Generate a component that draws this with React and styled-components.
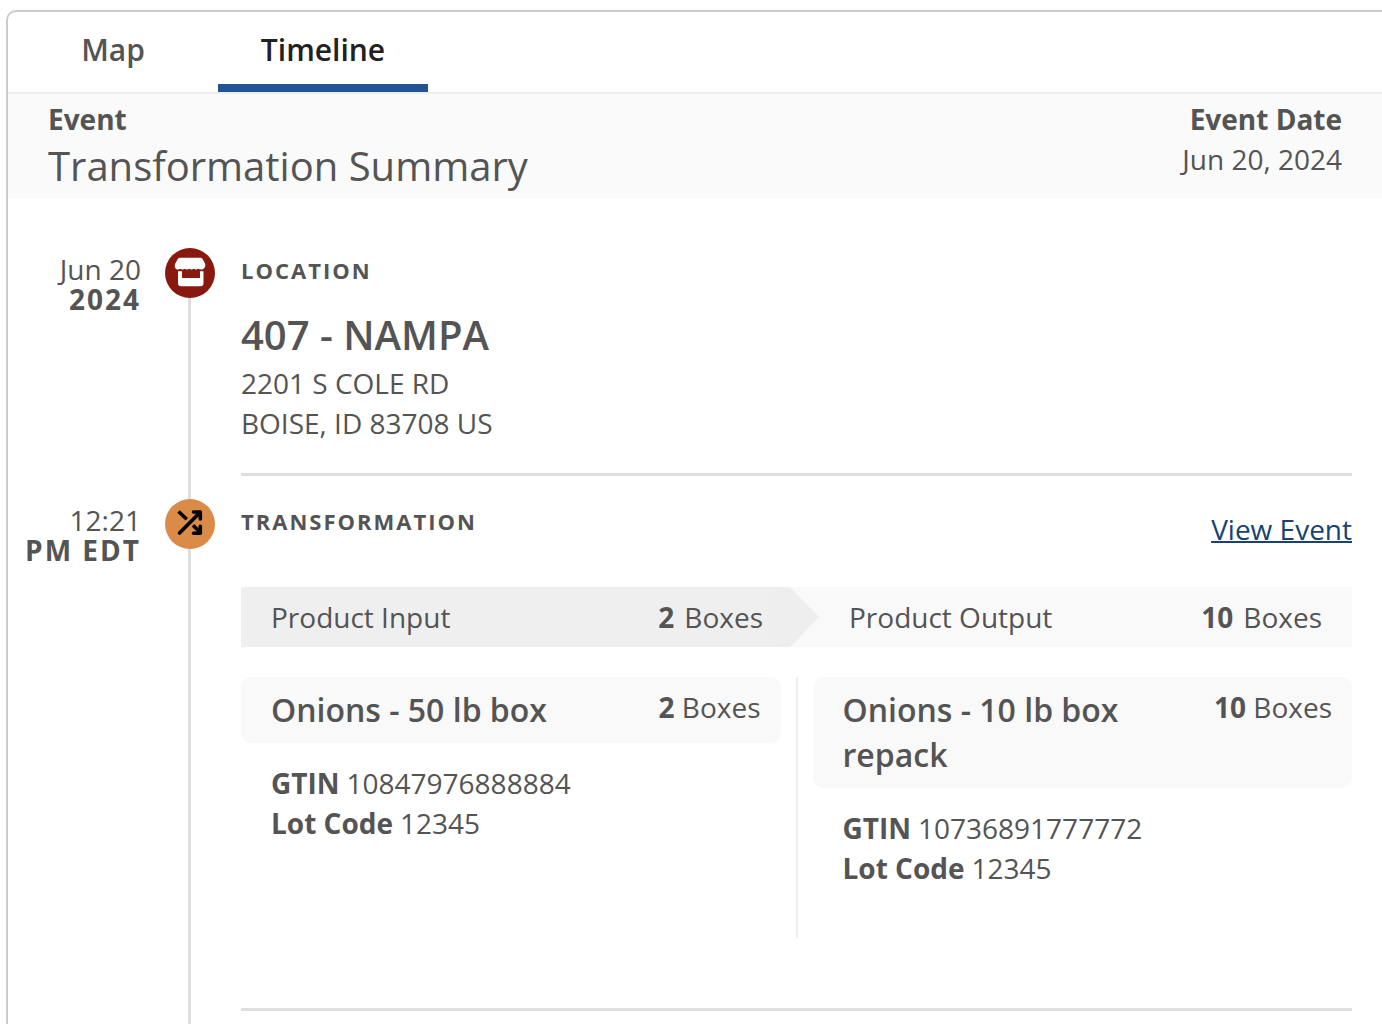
import styled, { createGlobalStyle } from 'styled-components';

const palette = {
  text: '#545454',
  textStrong: '#212121',
  primary: '#205493',
  link: '#174372',
  line: '#dedede',
  border: '#cccccc',
  rule: '#eeeeee',
  surface: '#fafafa',
  output: '#f9f9f9',
  input: '#efefef',
  location: '#87190e',
  transformation: '#da8b48',
};

const GlobalStyle = createGlobalStyle`
  *,
  *::before,
  *::after {
    box-sizing: border-box;
  }

  body {
    margin: 0;
    background: #ffffff;
    color: ${palette.text};
    font-family: 'Open Sans', 'Noto Sans', sans-serif;
    font-size: 28px;
    line-height: 40px;
  }

  h2,
  h3,
  p,
  ol,
  dl,
  dd {
    margin: 0;
    padding: 0;
  }
`;

/* Panel */

const Page = styled.main`
  height: 100vh;
  padding: 10px 0 0 6px;
  overflow: hidden;
`;

const Panel = styled.section`
  border: 2px solid ${palette.border};
  border-right: none;
  border-radius: 10px 0 0 10px;
`;

/* Tabs */

const TabList = styled.div`
  display: flex;
  border-bottom: 2px solid ${palette.rule};
`;

const Tab = styled.button`
  width: 210px;
  height: 80px;
  padding: 4px 0 0;
  border: none;
  border-bottom: 8px solid ${({ $active }) => ($active ? palette.primary : 'transparent')};
  background: transparent;
  color: ${({ $active }) => ($active ? palette.textStrong : palette.text)};
  font-family: inherit;
  font-size: 30px;
  font-weight: 600;
  line-height: 40px;
  cursor: pointer;
`;

/* Summary */

const Summary = styled.header`
  display: flex;
  justify-content: space-between;
  padding: 5px 40px;
  background: ${palette.surface};
`;

const SummaryDate = styled.div`
  text-align: right;
`;

const SummaryTitle = styled.p`
  font-size: 40px;
  line-height: 54px;
`;

/* Timeline */

const TimelineList = styled.ol`
  padding: 50px 30px 0 0;
  list-style: none;
`;

const TimelineItem = styled.li`
  display: grid;
  grid-template-columns: 133px 52px 1fr;
  column-gap: 24px;
`;

const Time = styled.div`
  padding-top: 6px;
  line-height: 30px;
  text-align: right;
`;

const TimeStrong = styled.strong`
  display: block;
  letter-spacing: 2px;
`;

const Rail = styled.div`
  display: flex;
  flex-direction: column;

  &::after {
    content: '';
    flex: 1;
    width: 3px;
    margin-left: 23px;
    background: ${palette.line};
  }
`;

const Marker = styled.span`
  width: 50px;
  height: 50px;
  border-radius: 50%;
  background: ${({ $color }) => $color};

  svg {
    display: block;
  }
`;

const ItemBody = styled.div`
  min-width: 0;
  margin-bottom: 23px;
  padding: 7px 0 ${({ $space }) => $space}px;
  border-bottom: 3px solid ${palette.line};
`;

const ItemHeader = styled.div`
  display: flex;
  justify-content: space-between;
  margin-bottom: ${({ $space }) => $space}px;
`;

const ItemLabel = styled.h2`
  font-size: 22px;
  font-weight: 700;
  line-height: 30px;
  letter-spacing: 2px;
  text-transform: uppercase;
`;

const PlaceName = styled.h3`
  padding-bottom: 2px;
  font-size: 40px;
  font-weight: 600;
  line-height: 52px;
`;

const EventLink = styled.a`
  color: ${palette.link};
  line-height: 46px;
  text-decoration-thickness: 2px;
`;

/* Input / output bar */

const FlowBar = styled.div`
  display: grid;
  grid-template-columns: 1fr 45px 1fr;
  margin-bottom: 30px;
  background: ${palette.output};
`;

const FlowCell = styled.div`
  display: flex;
  justify-content: space-between;
  padding: 10px ${({ $input }) => ($input ? 11 : 30)}px 10px 30px;
  background: ${({ $input }) => ($input ? palette.input : 'transparent')};
`;

const FlowTotal = styled.span`
  display: flex;
  gap: 10px;
`;

const FlowArrow = styled.span`
  background: ${palette.rule};
  clip-path: polygon(0 0, 16px 0, 100% 50%, 16px 100%, 0 100%);
`;

/* Products */

const Products = styled.div`
  display: grid;
  grid-template-columns: 1fr 2px 1fr;
  column-gap: 15px;
  min-height: 261px;
`;

const Divider = styled.span`
  background: ${palette.rule};
`;

const ProductHeader = styled.div`
  display: flex;
  justify-content: space-between;
  padding: 10px 20px 11px 30px;
  border-radius: 10px;
  background: ${palette.output};
`;

const ProductName = styled.h3`
  font-size: 32px;
  font-weight: 600;
  line-height: 45px;
`;

const Quantity = styled.span`
  flex-shrink: 0;
`;

const Details = styled.dl`
  padding: 20px 30px 0;
`;

const Detail = styled.div`
  display: flex;
  gap: 7px;

  dt {
    font-weight: 700;
  }
`;

const StoreIcon = () => (
  <svg width="50" height="50" viewBox="0 0 50 50" fill="#ffffff" aria-hidden="true">
    <path d="M15.500 9.800h19.500c1.200 0 2.200.5 2.700 1.500l2.300 4.200c1 2.300-.3 5.200-2.800 5.900-1.400.4-2.900 0-4-.7-1.400 1.100-3.300 1.100-4.500 0-1.200 1.100-3.200 1.100-4.400 0-1.200 1.100-3.200 1.100-4.400 0-1.200 1.100-3.100 1.100-4.500 0-1.100.7-1.900 1.100-3.300.7-2.500-.7-2.800-3.600-1.800-5.900l2.300-4.200c.5-1 1.700-1.500 2.900-1.500z" />
    <path d="M13 23.200h4v6.800h18v-6.800h3.500v12a3 3 0 0 1-3 3h-19.500a3 3 0 0 1-3-3z" />
  </svg>
);

const ShuffleIcon = () => (
  <svg
    width="50"
    height="50"
    viewBox="0 0 50 50"
    fill="none"
    stroke="#000000"
    strokeWidth="3.600"
    aria-hidden="true"
  >
    <g strokeLinecap="round" strokeLinejoin="round">
      <path d="M14.500 34L35 13.500" />
      <path d="M28.500 13h6.800v7" />
      <path d="M28.500 34.200h6.800v-7" />
    </g>
    <path d="M13.500 12.500l8.300 7.700" />
    <path d="M28 26.200l7 7" />
  </svg>
);

const products = [
  { name: 'Onions - 50 lb box', boxes: 2, gtin: '10847976888884', lot: '12345' },
  { name: 'Onions - 10 lb box repack', boxes: 10, gtin: '10736891777772', lot: '12345' },
];

const Product = ({ name, boxes, gtin, lot }) => (
  <div>
    <ProductHeader>
      <ProductName>{name}</ProductName>
      <Quantity>
        <strong>{boxes}</strong> Boxes
      </Quantity>
    </ProductHeader>
    <Details>
      <Detail>
        <dt>GTIN</dt>
        <dd>{gtin}</dd>
      </Detail>
      <Detail>
        <dt>Lot Code</dt>
        <dd>{lot}</dd>
      </Detail>
    </Details>
  </div>
);

const App = () => (
  <>
    <GlobalStyle />
    <Page>
      <Panel>
        <TabList role="tablist">
          <Tab type="button" role="tab" aria-selected="false">
            Map
          </Tab>
          <Tab type="button" role="tab" aria-selected="true" $active>
            Timeline
          </Tab>
        </TabList>
        <Summary>
          <div>
            <strong>Event</strong>
            <SummaryTitle>Transformation Summary</SummaryTitle>
          </div>
          <SummaryDate>
            <strong>Event Date</strong>
            <p>Jun 20, 2024</p>
          </SummaryDate>
        </Summary>
        <TimelineList>
          <TimelineItem>
            <Time>
              Jun 20 <TimeStrong>2024</TimeStrong>
            </Time>
            <Rail>
              <Marker $color={palette.location}>
                <StoreIcon />
              </Marker>
            </Rail>
            <ItemBody $space={30}>
              <ItemHeader $space={24}>
                <ItemLabel>Location</ItemLabel>
              </ItemHeader>
              <PlaceName>407 - NAMPA</PlaceName>
              <p>2201 S COLE RD</p>
              <p>BOISE, ID 83708 US</p>
            </ItemBody>
          </TimelineItem>
          <TimelineItem>
            <Time>
              12:21 <TimeStrong>PM EDT</TimeStrong>
            </Time>
            <Rail>
              <Marker $color={palette.transformation}>
                <ShuffleIcon />
              </Marker>
            </Rail>
            <ItemBody $space={70}>
              <ItemHeader $space={35}>
                <ItemLabel>Transformation</ItemLabel>
                <EventLink href="#event">View Event</EventLink>
              </ItemHeader>
              <FlowBar>
                <FlowCell $input>
                  <span>Product Input</span>
                  <FlowTotal>
                    <strong>2</strong>
                    <span>Boxes</span>
                  </FlowTotal>
                </FlowCell>
                <FlowArrow />
                <FlowCell>
                  <span>Product Output</span>
                  <FlowTotal>
                    <strong>10</strong>
                    <span>Boxes</span>
                  </FlowTotal>
                </FlowCell>
              </FlowBar>
              <Products>
                <Product {...products[0]} />
                <Divider />
                <Product {...products[1]} />
              </Products>
            </ItemBody>
          </TimelineItem>
        </TimelineList>
      </Panel>
    </Page>
  </>
);

export default App;
